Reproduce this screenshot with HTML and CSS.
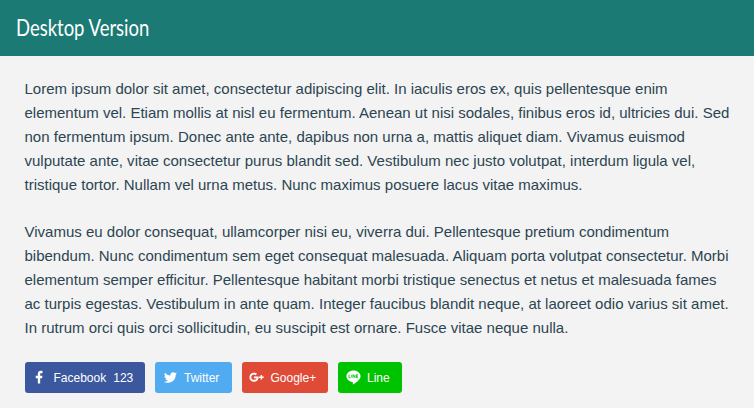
FILE: index.html
```html
<!DOCTYPE html>
<html lang="en">
<head>
<meta charset="utf-8">
<title>Desktop Version</title>
<link rel="stylesheet" href="styles.css">
</head>
<body>
<header class="header"><h1 class="title">Desktop Version</h1></header>
<main class="content">
<p>Lorem ipsum dolor sit amet, consectetur adipiscing elit. In iaculis eros ex, quis pellentesque enim<br>
elementum vel. Etiam mollis at nisl eu fermentum. Aenean ut nisi sodales, finibus eros id, ultricies dui. Sed<br>
non fermentum ipsum. Donec ante ante, dapibus non urna a, mattis aliquet diam. Vivamus euismod<br>
vulputate ante, vitae consectetur purus blandit sed. Vestibulum nec justo volutpat, interdum ligula vel,<br>
tristique tortor. Nullam vel urna metus. Nunc maximus posuere lacus vitae maximus.</p>
<p>Vivamus eu dolor consequat, ullamcorper nisi eu, viverra dui. Pellentesque pretium condimentum<br>
bibendum. Nunc condimentum sem eget consequat malesuada. Aliquam porta volutpat consectetur. Morbi<br>
elementum semper efficitur. Pellentesque habitant morbi tristique senectus et netus et malesuada fames<br>
ac turpis egestas. Vestibulum in ante quam. Integer faucibus blandit neque, at laoreet odio varius sit amet.<br>
In rutrum orci quis orci sollicitudin, eu suscipit est ornare. Fusce vitae neque nulla.</p>
<div class="share">
<a class="button facebook"><svg class="icon" viewBox="0 0 16 16"><path d="M6.200 14.500V8.800H4V6.100h2.200V4.200C6.200 2 7.500.9 9.500.9c.9 0 1.500.1 1.700.1v2.400H9.900c-1 0-1.200.5-1.200 1.200v1.500h2.400l-.3 2.700H8.700v5.700z"/></svg><span class="label">Facebook</span><span class="count">123</span></a>
<a class="button twitter"><svg class="icon" viewBox="0 0 16 16"><path d="M15 3.600c-.5.2-1.100.4-1.600.5.6-.4 1-1 1.200-1.600-.5.3-1.200.6-1.800.7a2.900 2.900 0 0 0-4.900 2.600C5.500 5.700 3.400 4.500 2 2.800c-.8 1.300-.4 3 .9 3.900-.5 0-.9-.1-1.300-.4 0 1.400 1 2.600 2.300 2.900-.4.100-.9.100-1.300 0 .4 1.200 1.400 2 2.700 2A5.800 5.800 0 0 1 1 12.400c1.300.8 2.800 1.300 4.400 1.300 5.300 0 8.300-4.500 8.100-8.600.6-.4 1.100-.9 1.500-1.500z"/></svg><span class="label">Twitter</span></a>
<a class="button google"><svg class="icon" viewBox="0 0 16 16"><path d="M5.300 6.900v1.900h2.700c-.3 1-1.200 1.700-2.700 1.700a2.800 2.800 0 0 1 0-5.600c.8 0 1.400.3 1.800.7l1.500-1.500A4.800 4.800 0 0 0 5.300 2.800a4.900 4.900 0 0 0 0 9.800c3 0 5-2 5-4.900 0-.3 0-.6-.1-.8zM12.400 5.200v1.700h-1.700v1.600h1.700v1.700H14V8.500h1.700V6.900H14V5.200z"/></svg><span class="label">Google+</span></a>
<a class="button line"><svg class="icon" viewBox="0 0 16 16"><path d="M8 .5C3.800.5.500 3.200.500 6.700c0 3.100 2.700 5.600 6.300 6.100.8.200.6.700.4 2.200 0 .3.200.5.600.3 2.900-1.700 7.700-5 7.700-8.600C15.500 3.200 12.200.5 8 .5z"/><path class="mark" d="M3.200 5v3.200h1.600M6.200 5v3.200M7.600 8.200V5l2 3.200V5M12.900 5h-1.700v3.200h1.700M11.200 6.600h1.600"/></svg><span class="label">Line</span></a>
</div>
</main>
</body>
</html>
```
FILE: styles.css
```css
* { box-sizing: border-box; }
body {
  margin: 0;
  background: #f3f3f3;
  color: #2c4551;
  font-family: "Liberation Sans", Arial, sans-serif;
}
.header {
  height: 56px;
  padding: 0 16px;
  display: flex;
  align-items: center;
  background: #1b7a74;
}
.title {
  margin: 0;
  color: #fff;
  font: 400 22.500px/32px Lato, sans-serif;
  white-space: nowrap;
  transform: scaleX(.821);
  transform-origin: left;
}
.content { padding: 21px 24px 0; }
p {
  margin: 0 0 23px .5px;
  font-size: 15px;
  line-height: 24px;
  letter-spacing: .003px;
  white-space: nowrap;
}
.share { display: flex; gap: 10px; margin: -1px 0 0 1px; }
.button {
  display: flex;
  align-items: center;
  height: 31px;
  border-radius: 3px;
  padding: 0 11px 0 7px;
  color: #fff;
  font-size: 12px;
  line-height: 16px;
}
.icon { width: 15px; height: 15px; margin-right: 6.500px; fill: #fff; }
.label { margin-top: 1px; }
.count { margin: 1px 0 0 7px; }
.mark { fill: none; stroke: #00c300; stroke-width: .9; }
.facebook { width: 120px; background: #3b579d; }
.twitter { width: 77px; padding-left: 7.500px; background: #50abf1; }
.google { width: 86px; background: #df4b37; }
.line { width: 64px; padding-left: 7.500px; background: #00c300; }
```
